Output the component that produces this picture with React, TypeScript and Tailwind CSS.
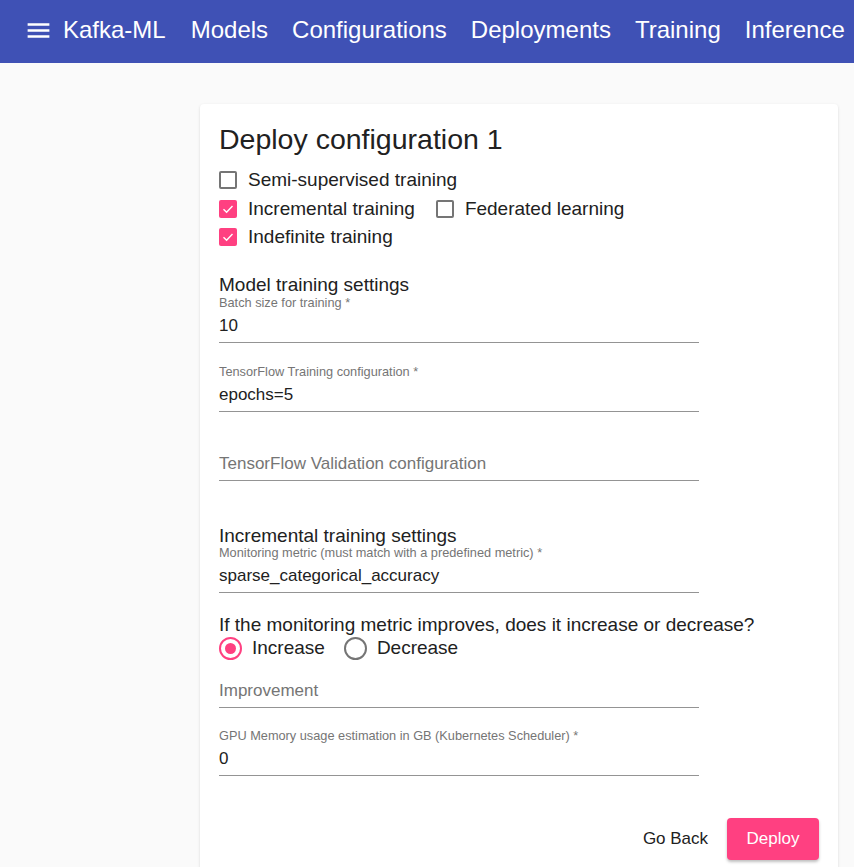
import { useState } from "react";

const navItems = ["Models", "Configurations", "Deployments", "Training", "Inference"];

const Checkbox = ({ checked, label }: { checked: boolean; label: string }) => (
  <label className="flex items-center h-[28.5px] cursor-pointer">
    {checked ? (
      <span className="w-[18px] h-[18px] rounded-[2px] bg-[#ff4081] flex items-center justify-center">
        <svg width="14" height="14" viewBox="0 0 14 14" fill="none">
          <path d="M2.5 7.2 L5.6 10.2 L11.5 4" stroke="white" strokeWidth="1.4" />
        </svg>
      </span>
    ) : (
      <span className="w-[18px] h-[18px] rounded-[2px] border-2 border-[#757575] bg-white" />
    )}
    <span className="ml-[11px] text-[19px] text-[#212121]">{label}</span>
  </label>
);

const Radio = ({ checked, label }: { checked: boolean; label: string }) => (
  <label className="flex items-center h-[24px] cursor-pointer">
    <span
      className={`w-[23px] h-[23px] rounded-full border-2 flex items-center justify-center ${
        checked ? "border-[#ff4081]" : "border-[#757575]"
      }`}
    >
      {checked && <span className="w-[11px] h-[11px] rounded-full bg-[#ff4081]" />}
    </span>
    <span className="ml-[10px] text-[19px] text-[#212121]">{label}</span>
  </label>
);

const Field = ({
  label,
  value,
  className = "",
}: {
  label: string;
  value?: string;
  className?: string;
}) => (
  <div className={`w-[480px] ${className}`}>
    <div className="h-[16px] leading-[16px] text-[12.75px] text-[#757575]">
      {value !== undefined ? label : ""}
    </div>
    <div className="mt-[4px] h-[22px] leading-[22px] text-[17px]">
      {value !== undefined ? (
        <span className="text-[#212121]">{value}</span>
      ) : (
        <span className="text-[#757575]">{label}</span>
      )}
    </div>
    <div className="mt-[5px] h-px bg-[#949494]" />
  </div>
);

export default function App() {
  const [metricUp] = useState(true);

  return (
    <div className="min-h-[867px] bg-[#fafafa] [font-family:'Liberation_Sans',Arial,sans-serif]">
      <header className="h-[63px] bg-[#3f51b5] flex items-center pl-[24px] pb-[3px] text-white">
        <svg width="29" height="29" viewBox="0 0 24 24" fill="white">
          <path d="M3 18h18v-2H3v2zm0-5h18v-2H3v2zm0-7v2h18V6H3z" />
        </svg>
        <span className="ml-[10px] text-[24px]">Kafka-ML</span>
        <nav className="flex ml-[25px] gap-[24px] text-[24px] whitespace-nowrap">
          {navItems.map((item) => (
            <span key={item}>{item}</span>
          ))}
        </nav>
      </header>

      <div className="ml-[200px] mt-[41px] w-[638px] bg-white rounded-[4px] shadow-[0_1px_3px_rgba(0,0,0,0.12),0_1px_1px_rgba(0,0,0,0.06)] pl-[19px] pr-[19px] pt-[18px] pb-[20px]">
        <h1 className="text-[28.5px] leading-[34px] text-[#212121]">Deploy configuration 1</h1>

        <div className="mt-[10px] flex flex-col">
          <Checkbox checked={false} label="Semi-supervised training" />
          <div className="flex gap-[21px]">
            <Checkbox checked label="Incremental training" />
            <Checkbox checked={false} label="Federated learning" />
          </div>
          <Checkbox checked label="Indefinite training" />
        </div>

        <div className="mt-[23px] text-[19px] leading-[20px] text-[#212121]">Model training settings</div>
        <Field label="Batch size for training *" value="10" />
        <Field className="mt-[21px]" label="TensorFlow Training configuration *" value="epochs=5" />
        <Field className="mt-[21px]" label="TensorFlow Validation configuration" />

        <div className="mt-[45px] text-[19px] leading-[20px] text-[#212121]">Incremental training settings</div>
        <Field className="-mt-[1px]" label="Monitoring metric (must match with a predefined metric) *" value="sparse_categorical_accuracy" />

        <div className="mt-[21px] text-[19px] leading-[22px] text-[#212121]">
          If the monitoring metric improves, does it increase or decrease?
        </div>
        <div className="mt-[1px] flex gap-[19px]">
          <Radio checked={metricUp} label="Increase" />
          <Radio checked={!metricUp} label="Decrease" />
        </div>

        <Field className="-mt-[1px]" label="Improvement" />
        <Field className="mt-[20px]" label="GPU Memory usage estimation in GB (Kubernetes Scheduler) *" value="0" />

        <div className="mt-[42px] flex justify-end">
          <button className="h-[42px] px-[19px] text-[17px] text-[#212121] rounded-[4px]">Go Back</button>
          <button className="h-[42px] px-[19.5px] text-[17px] text-white bg-[#ff4081] rounded-[4px] shadow-[0_2px_3px_rgba(0,0,0,0.25)]">
            Deploy
          </button>
        </div>
      </div>
    </div>
  );
}
